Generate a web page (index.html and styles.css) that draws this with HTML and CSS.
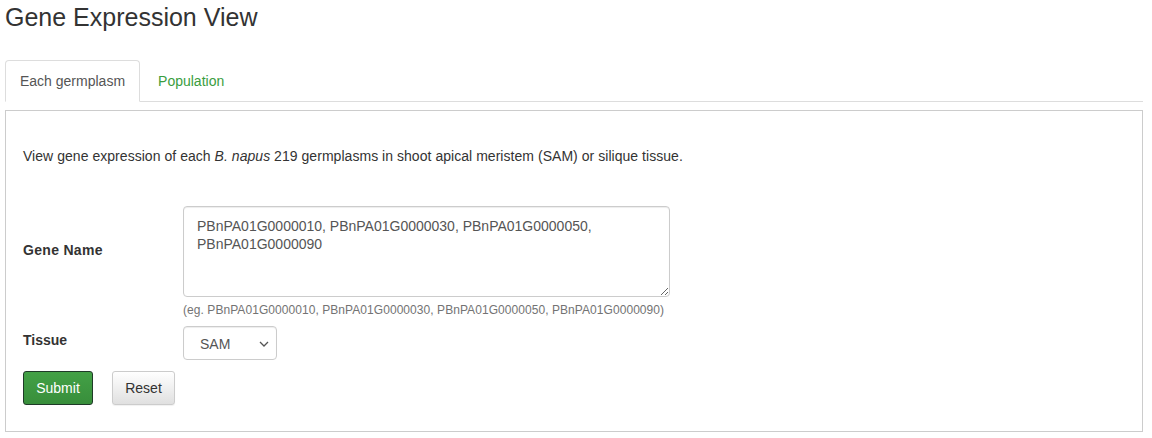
FILE: index.html
```html
<!DOCTYPE html>
<html lang="en">
<head>
<meta charset="utf-8">
<title>Gene Expression View</title>
<link rel="stylesheet" href="styles.css">
</head>
<body>
<div class="page">
  <h1 class="title">Gene Expression View</h1>
  <ul class="tabs">
    <li class="tab active">Each germplasm</li>
    <li class="tab">Population</li>
  </ul>
  <div class="panel">
    <p class="intro">View gene expression of each <i>B. napus</i> 219 germplasms in shoot apical meristem (SAM) or silique tissue.</p>
    <form class="form">
      <div class="row row-gene">
        <label class="label">Gene Name</label>
        <div class="field">
          <textarea class="textarea">PBnPA01G0000010, PBnPA01G0000030, PBnPA01G0000050, PBnPA01G0000090</textarea>
          <div class="help">(eg. PBnPA01G0000010, PBnPA01G0000030, PBnPA01G0000050, PBnPA01G0000090)</div>
        </div>
      </div>
      <div class="row row-tissue">
        <label class="label label-tissue">Tissue</label>
        <div class="select">
          <span>SAM</span>
          <svg class="chev" width="10" height="6" viewBox="0 0 10 6"><path d="M1 1 L5 5 L9 1" fill="none" stroke="#555" stroke-width="1.3"/></svg>
        </div>
      </div>
      <div class="buttons">
        <button type="button" class="btn btn-submit">Submit</button>
        <button type="button" class="btn btn-reset">Reset</button>
      </div>
    </form>
  </div>
</div>
</body>
</html>
```
FILE: styles.css
```css
* { box-sizing: border-box; }
html, body { margin: 0; padding: 0; background: #fff; }
body {
  font-family: "Liberation Sans", Arial, Helvetica, sans-serif;
  font-size: 14px;
  line-height: 20px;
  color: #333;
}
.page { padding: 0 9px 0 5px; }
.title {
  margin: 0;
  padding-top: 2px;
  font-size: 25px;
  font-weight: normal;
  line-height: 30px;
  color: #333;
}
.tabs {
  list-style: none;
  margin: 28px 0 0 0;
  padding: 0;
  display: flex;
  border-bottom: 1px solid #ddd;
}
.tab {
  padding: 10px 14px;
  line-height: 20px;
  margin-bottom: -1px;
  margin-right: 2px;
  border: 1px solid transparent;
  border-radius: 4px 4px 0 0;
  color: #3a9d3e;
}
.tab.active {
  color: #555;
  border-color: #ddd;
  border-bottom-color: #fff;
  background: #fff;
}
.tab + .tab { padding-left: 15px; }
.panel {
  margin-top: 8px;
  border: 1px solid #ccc;
  padding: 35px 17px 26px 17px;
  height: 322px;
}
.intro { margin: 0; letter-spacing: 0.04px; }
.form { margin-top: 40px; }
.row { display: flex; }
.row-gene { align-items: flex-start; }
.label {
  width: 160px;
  flex: none;
  font-weight: bold;
  color: #333;
}
.row-gene .label { padding-top: 34px; letter-spacing: 0.3px; }
.field { display: flex; flex-direction: column; }
.textarea {
  display: block;
  width: 487px;
  height: 91px;
  margin: 0;
  padding: 10px 13px;
  border: 1px solid #ccc;
  border-radius: 4px;
  font-family: "Liberation Sans", Arial, Helvetica, sans-serif;
  font-size: 14px;
  line-height: 18px;
  color: #555;
  resize: both;
  box-shadow: inset 0 1px 1px rgba(0,0,0,0.075);
}
.help {
  margin-top: 5px;
  font-size: 12px;
  line-height: 16px;
  letter-spacing: 0.06px;
  color: #737373;
}
.row-tissue { margin-top: 8px; }
.label-tissue { padding-top: 4px; }
.select {
  width: 94px;
  height: 34px;
  border: 1px solid #ccc;
  border-radius: 4px;
  display: flex;
  align-items: center;
  justify-content: space-between;
  padding: 2px 7px 0 16px;
  color: #555;
  box-shadow: inset 0 1px 1px rgba(0,0,0,0.075);
}
.chev { margin-top: -1px; }
.buttons { display: flex; gap: 19px; margin-top: 11px; }
.btn {
  height: 34px;
  padding: 6px 12px;
  font-family: "Liberation Sans", Arial, Helvetica, sans-serif;
  font-size: 14px;
  line-height: 20px;
  border-radius: 3px;
  border: 1px solid #ccc;
  cursor: pointer;
}
.btn-submit {
  width: 70px;
  color: #fff;
  background: linear-gradient(#43a146, #388e3b);
  border-color: #1f3a28;
}
.btn-reset {
  width: 63px;
  color: #333;
  background: linear-gradient(#fff, #e0e0e0);
  border-color: #ccc;
  box-shadow: 0 1px 1px rgba(0,0,0,0.06);
}
```
